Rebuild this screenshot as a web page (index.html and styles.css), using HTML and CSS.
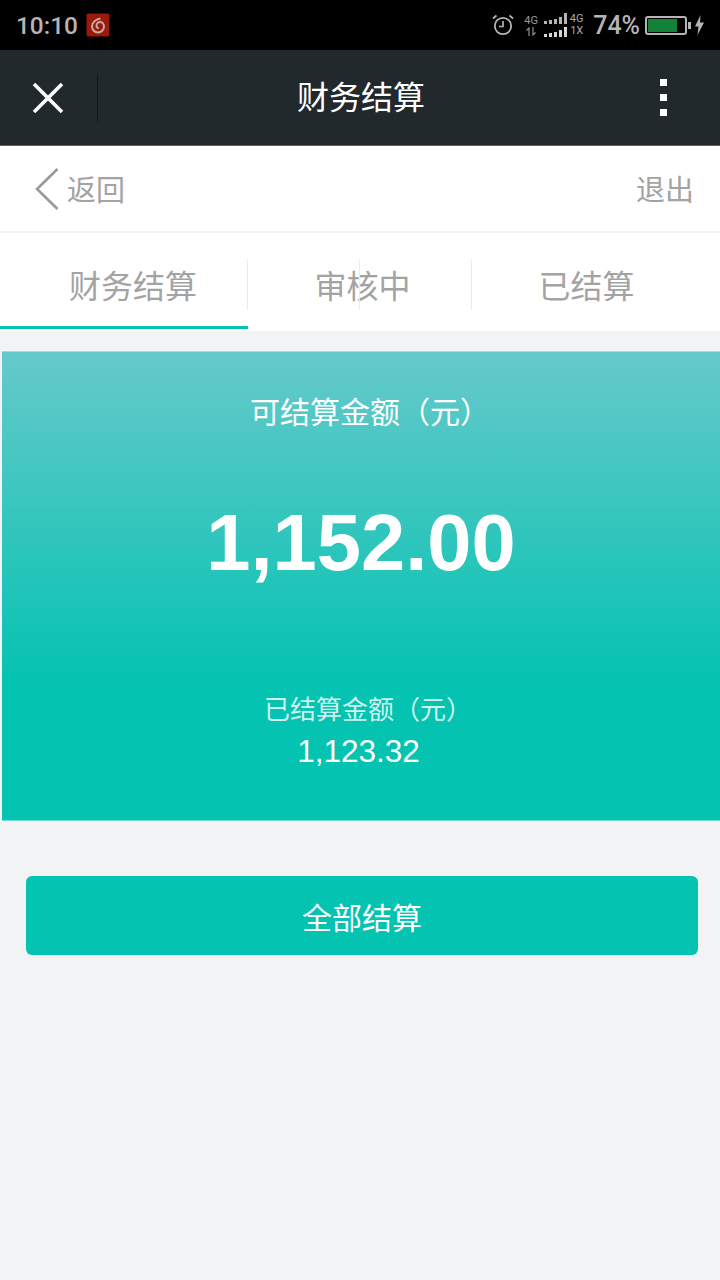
FILE: index.html
```
<!DOCTYPE html>
<html lang="zh">
<head>
<meta charset="utf-8">
<title>财务结算</title>
<link rel="stylesheet" href="styles.css">
</head>
<body>
<div class="status">
  <div class="status-left">
    <span class="time">10:10</span>
    <svg class="netease" width="24" height="24" viewBox="0 0 24 24"><rect x="0.500" y="0.500" width="23" height="23" rx="2" fill="#9c1a0c" stroke="#4a0a04"/><path d="M14.500 5.500C10.500 6 6 9 6 13.500a6 6 0 0 0 12 0c0-2.800-2-4.500-4-4.500s-3.500 1.600-3.500 3.600c0 1.500 1 2.600 2.300 2.600" fill="none" stroke="#c6aca6" stroke-width="1.900"/></svg>
  </div>
  <div class="status-right">
    <svg class="alarm" width="22" height="22" viewBox="0 0 22 22"><circle cx="11" cy="12" r="8.200" fill="none" stroke="#b5b5b5" stroke-width="1.800"/><path d="M11 7v5.500H7M1 4.500 4.500 1.500M21 4.500 17.500 1.500" fill="none" stroke="#b5b5b5" stroke-width="1.700"/></svg>
    <div class="net-col"><span>4G</span><svg width="12" height="9" viewBox="0 0 12 9"><path d="M4 9V1L1.500 3.500M8 0v8l2.500-2.500" fill="none" stroke="#8f8f8f" stroke-width="1.200"/></svg></div>
    <div class="signals">
      <svg width="24" height="12" viewBox="0 0 24 12"><path d="M0 8h3v3H0zM5 7h3v4H5zM10 6h3v5h-3zM15 4h3v7h-3zM20 0h3v11h-3z" fill="#b5b5b5"/></svg>
      <svg width="24" height="12" viewBox="0 0 24 12"><path d="M0 8h3v3H0zM5 7h3v4H5zM10 6h3v5h-3zM15 4h3v7h-3zM20 1h3v10h-3z" fill="#d5d5d5"/></svg>
    </div>
    <div class="net-col net-side"><span>4G</span><span>1X</span></div>
    <span class="pct">74%</span>
    <div class="battery"><div class="battery-fill"></div></div>
    <div class="battery-tip"></div>
    <svg class="bolt" width="9" height="20" viewBox="0 0 9 20"><path d="M5.500 0 0 11.500h3.500L2.500 20 9 7.500H5z" fill="#b5b5b5"/></svg>
  </div>
</div>

<div class="nav">
  <div class="nav-close">
    <svg width="32" height="32" viewBox="0 0 32 32"><path d="M2 2 30 30M30 2 2 30" stroke="#fff" stroke-width="3.600" fill="none"/></svg>
  </div>
  <div class="nav-sep"></div>
  <div class="nav-title">财务结算</div>
  <div class="nav-more"><i></i><i></i><i></i></div>
</div>

<div class="subbar">
  <div class="back">
    <svg width="24" height="42" viewBox="0 0 24 42"><path d="M22.500 1 2 21l20.500 20" fill="none" stroke="#999" stroke-width="2.600"/></svg>
    <span>返回</span>
  </div>
  <span class="logout">退出</span>
</div>

<div class="tabs">
  <div class="tab tab-active"><span>财务结算</span></div>
  <div class="tab tab-mid"><span>审核中</span></div>
  <div class="tab tab-last"><span>已结算</span></div>
</div>

<div class="main">
  <section class="card">
    <div class="card-label">可结算金额（元）</div>
    <div class="card-amount">1,152.00</div>
    <div class="card-sub">已结算金额（元）</div>
    <div class="card-subamount">1,123.32</div>
  </section>
  <button class="settle">全部结算</button>
</div>
</body>
</html>
```

FILE: styles.css
```
* { box-sizing: border-box; }
html, body { margin: 0; padding: 0; }
body {
  width: 720px;
  height: 1280px;
  overflow: hidden;
  display: flex;
  flex-direction: column;
  background: #f2f3f5;
  font-family: "Liberation Sans", "Noto Sans CJK SC", sans-serif;
}
.status {
  height: 50px;
  flex: none;
  background: #000;
  display: flex;
  align-items: center;
  justify-content: space-between;
  padding: 0 16px 0 16px;
  color: #b5b5b5;
}
.status-left, .status-right { display: flex; align-items: center; }
.time { font: 500 24.400px Roboto, sans-serif; }
.netease { margin-left: 8px; }
.alarm { margin-right: 10px; }
.net-col {
  display: flex;
  flex-direction: column;
  align-items: center;
  width: 14px;
  font: 11px/12px Roboto, sans-serif;
  color: #9a9a9a;
}
.net-side { color: #a8a8a8; margin-left: 2px; width: 13px; }
.signals { display: flex; flex-direction: column; gap: 1px; margin-left: 6px; }
.pct { font: 500 25px Roboto, sans-serif; margin-left: 10px; }
.battery {
  width: 42px;
  height: 19px;
  margin-left: 5px;
  border: 2px solid #b5b5b5;
  border-radius: 3px;
  padding: 1px;
}
.battery-fill { width: 29px; height: 100%; background: #118238; }
.battery-tip { width: 3px; height: 7px; background: #b5b5b5; margin-left: 1px; }
.bolt { margin-left: 4px; }

.nav {
  height: 96px;
  flex: none;
  background: #22292c;
  border-bottom: 1px solid #5a5f61;
  display: flex;
  align-items: center;
}
.nav-close { display: flex; margin-left: 32px; }
.nav-sep { width: 1px; height: 48px; background: #15191b; margin-left: 33px; }
.nav-title {
  flex: 1;
  text-align: center;
  color: #fff;
  font-size: 32px;
  line-height: 44px;
  padding-right: 36px;
}
.nav-more {
  display: flex;
  flex-direction: column;
  gap: 8px;
  width: 7px;
  margin-right: 53px;
}
.nav-more i { display: block; width: 7px; height: 7px; background: #fff; }

.subbar {
  height: 87px;
  flex: none;
  background: #fff;
  border-bottom: 2px solid #f2f3f5;
  display: flex;
  align-items: center;
  justify-content: space-between;
  padding: 0 26px 0 35px;
  color: #a3a3a3;
  font-size: 29px;
}
.subbar span { line-height: 40px; margin-top: 4px; }
.back { display: flex; align-items: center; gap: 8px; }

.tabs {
  height: 98px;
  flex: none;
  background: #fff;
  display: flex;
}
.tab {
  width: 224px;
  height: 95px;
  padding-top: 28px;
  position: relative;
  text-align: center;
  color: #a3a3a3;
  font-size: 32px;
  line-height: 52px;
}
.tab-active {
  width: 248px;
  height: 96px;
  border-bottom: 3px solid #05c3b1;
  padding-left: 18px;
}
.tab-mid, .tab-last { padding-left: 5px; }
.tab-active::after, .tab-mid::before, .tab-mid::after {
  content: "";
  position: absolute;
  top: 26px;
  width: 1px;
  height: 51px;
  background: #ebebeb;
}
.tab-active::after { right: 0; }
.tab-mid::before { left: 111px; }
.tab-mid::after { right: 0; }

.main { flex: 1; padding-top: 20px; }
.card {
  margin-left: 2px;
  height: 470px;
  background: linear-gradient(180deg, #66c9cb 0%, #05c3b1 70%, #05c3b1 100%);
  border-top: 1px solid #9fdcdc;
  border-bottom: 1px solid #74dcd0;
  color: #fff;
  text-align: center;
  display: flex;
  flex-direction: column;
  align-items: center;
  padding-top: 41px;
}
.card-label { font-size: 30px; line-height: 40px; padding-left: 18px; }
.card-amount { font-size: 79.500px; line-height: 92px; font-weight: 700; margin-top: 64px; }
.card-sub { font-size: 26px; line-height: 36px; margin-top: 103px; padding-left: 14px; color: rgba(255,255,255,.82); }
.card-subamount { font-size: 31.500px; line-height: 40px; margin-top: 3px; margin-left: -5px; }
.settle {
  display: block;
  width: 672px;
  height: 79px;
  margin: 55px 0 0 26px;
  border: 0;
  border-radius: 6px;
  background: #05c3b1;
  color: #fff;
  font: 30px "Liberation Sans", "Noto Sans CJK SC", sans-serif;
}
```
